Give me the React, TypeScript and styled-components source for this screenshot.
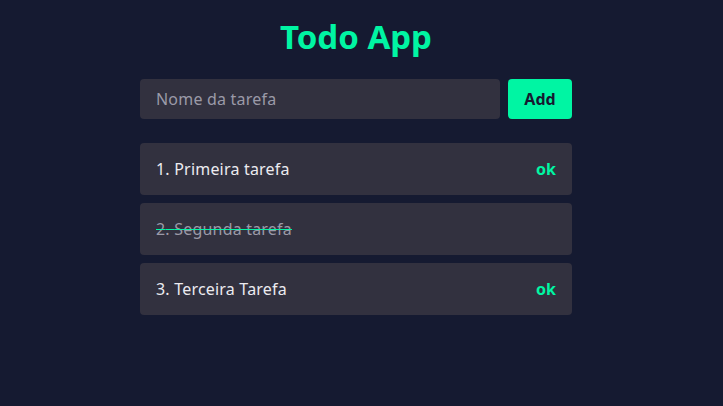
import React, { useState } from "react";
import styled, { createGlobalStyle } from "styled-components";

const GlobalStyle = createGlobalStyle`
  html, body {
    margin: 0;
    padding: 0;
    background: #151a31;
    font-family: "Noto Sans", "Inter", sans-serif;
  }
`;

const Page = styled.main`
  width: 712px;
  min-height: 406px;
  display: flex;
  flex-direction: column;
  align-items: center;
`;

const Title = styled.h1`
  margin: 17px 0 22px;
  font-size: 33px;
  line-height: 40px;
  font-weight: 700;
  color: #00f5a3;
`;

const Content = styled.div`
  width: 432px;
  display: flex;
  flex-direction: column;
  gap: 24px;
`;

const Form = styled.form`
  display: flex;
  gap: 8px;
`;

const Input = styled.input`
  flex: 1;
  height: 40px;
  box-sizing: border-box;
  padding: 0 16px;
  border: none;
  border-radius: 4px;
  background: #32313f;
  color: #e8e8ec;
  font-family: inherit;
  font-size: 16px;
  letter-spacing: 0.2px;
  outline: none;

  &::placeholder {
    color: #9b9aa8;
  }
`;

const AddButton = styled.button`
  width: 64px;
  height: 40px;
  border: none;
  border-radius: 4px;
  background: #00f5a3;
  color: #161a31;
  font-family: inherit;
  font-size: 16px;
  font-weight: 700;
  cursor: pointer;
`;

const List = styled.ul`
  list-style: none;
  margin: 0;
  padding: 0;
  display: flex;
  flex-direction: column;
  gap: 8px;
`;

const Item = styled.li`
  height: 52px;
  box-sizing: border-box;
  padding: 0 16px;
  display: flex;
  align-items: center;
  justify-content: space-between;
  border-radius: 4px;
  background: #32313f;
`;

const ItemText = styled.span<{ $done: boolean }>`
  font-size: 16px;
  letter-spacing: 0.2px;
  color: ${(p) => (p.$done ? "#9b9aa8" : "#ecebf0")};
  text-decoration: ${(p) => (p.$done ? "line-through" : "none")};
  text-decoration-color: #00f5a3;
  text-decoration-thickness: 1px;
`;

const OkButton = styled.button`
  border: none;
  background: none;
  padding: 0;
  color: #00f5a3;
  font-family: inherit;
  font-size: 16px;
  font-weight: 700;
  cursor: pointer;
`;

type Todo = { id: number; title: string; done: boolean };

export default function App() {
  const [todos, setTodos] = useState<Todo[]>([
    { id: 1, title: "Primeira tarefa", done: false },
    { id: 2, title: "Segunda tarefa", done: true },
    { id: 3, title: "Terceira Tarefa", done: false },
  ]);
  const [name, setName] = useState("");

  const add = (e: React.FormEvent) => {
    e.preventDefault();
    if (!name.trim()) return;
    setTodos([...todos, { id: todos.length + 1, title: name, done: false }]);
    setName("");
  };

  const finish = (id: number) => {
    setTodos(todos.map((t) => (t.id === id ? { ...t, done: true } : t)));
  };

  return (
    <Page>
      <GlobalStyle />
      <Title>Todo App</Title>
      <Content>
        <Form onSubmit={add}>
          <Input
            placeholder="Nome da tarefa"
            value={name}
            onChange={(e) => setName(e.target.value)}
          />
          <AddButton type="submit">Add</AddButton>
        </Form>
        <List>
          {todos.map((todo, i) => (
            <Item key={todo.id}>
              <ItemText $done={todo.done}>
                {i + 1}. {todo.title}
              </ItemText>
              {!todo.done && <OkButton onClick={() => finish(todo.id)}>ok</OkButton>}
            </Item>
          ))}
        </List>
      </Content>
    </Page>
  );
}
